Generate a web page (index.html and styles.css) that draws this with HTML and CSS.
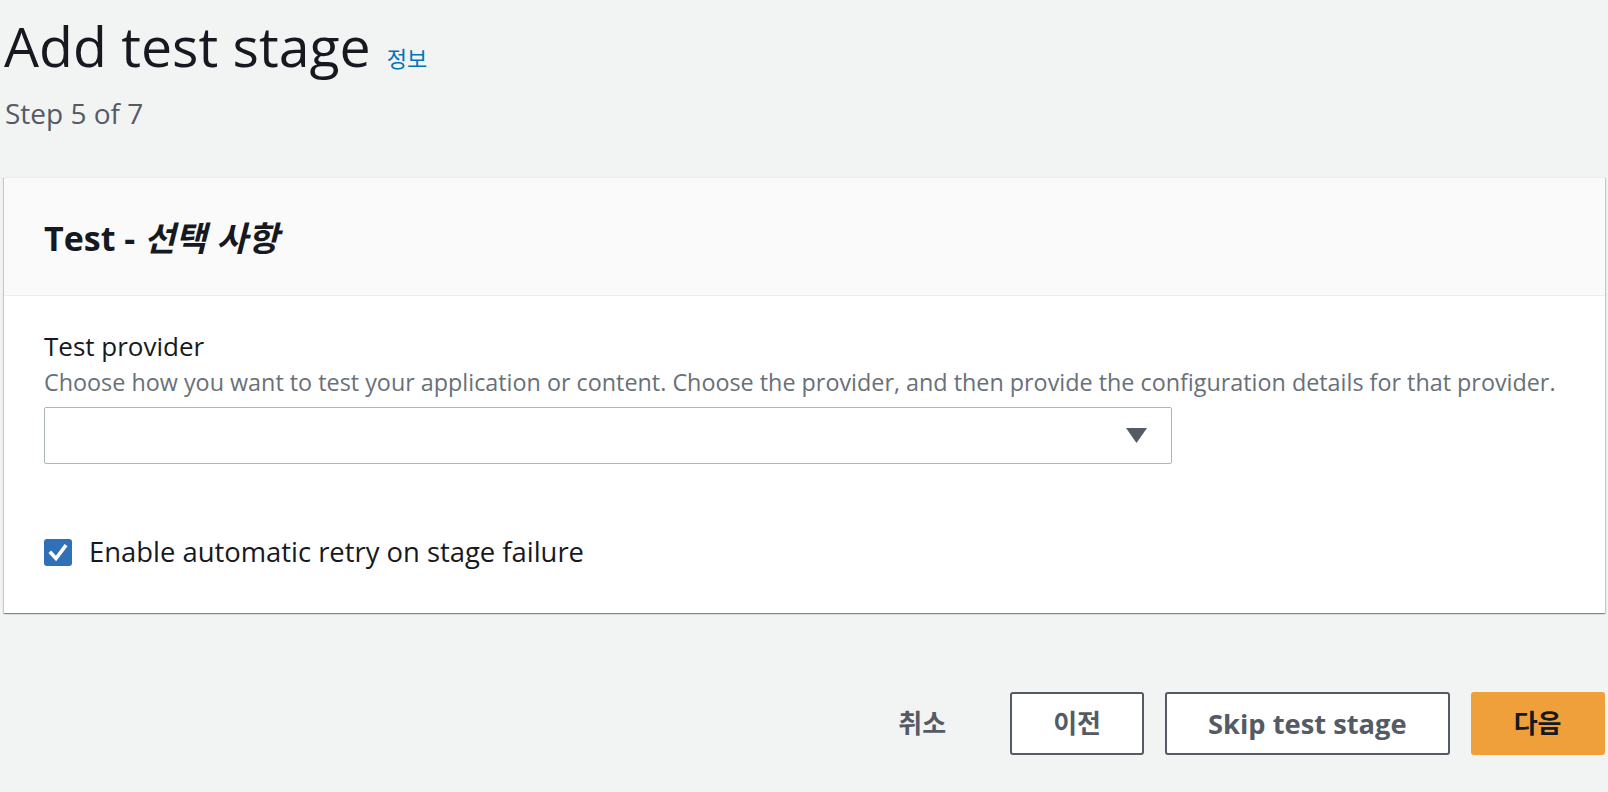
FILE: index.html
```html
<!DOCTYPE html>
<html lang="ko">
<head>
<meta charset="utf-8">
<title>Add test stage</title>
<link rel="stylesheet" href="styles.css">
</head>
<body>
<div class="page">
  <header class="page-head">
    <div class="title-row">
      <h1 class="title">Add test stage</h1>
      <a class="info-link" href="#">정보</a>
    </div>
    <div class="step">Step 5 of 7</div>
  </header>

  <section class="card">
    <div class="card-head">
      <h2 class="card-title">Test - <i class="optional">선택 사항</i></h2>
    </div>
    <div class="card-body">
      <div class="field">
        <label class="field-label">Test provider</label>
        <div class="field-desc">Choose how you want to test your application or content. Choose the provider, and then provide the configuration details for that provider.</div>
        <div class="select">
          <svg class="caret" width="21" height="15" viewBox="0 0 21 15"><polygon points="0,0 21,0 10.5,15" fill="#545b64"/></svg>
        </div>
      </div>
      <div class="check-row">
        <span class="checkbox">
          <svg width="28" height="27" viewBox="0 0 28 27"><polyline points="7,14 12,19.5 21,7.5" fill="none" stroke="#fff" stroke-width="3.6" stroke-linecap="square"/></svg>
        </span>
        <span class="check-label">Enable automatic retry on stage failure</span>
      </div>
    </div>
  </section>

  <div class="actions">
    <button class="btn btn-link">취소</button>
    <button class="btn btn-normal">이전</button>
    <button class="btn btn-normal btn-latin">Skip test stage</button>
    <button class="btn btn-primary">다음</button>
  </div>
</div>
</body>
</html>
```
FILE: styles.css
```css
html, body {
  margin: 0;
  padding: 0;
  background: #f2f3f3;
}
body {
  font-family: "Open Sans", "Noto Sans CJK KR", sans-serif;
  color: #16191f;
}
.page {
  padding: 8px 3px 0 4px;
}
.title-row {
  display: flex;
  align-items: baseline;
  gap: 16px;
}
.title {
  margin: 0;
  font-size: 55.4px;
  line-height: 76px;
  font-weight: 400;
  color: #16191f;
}
.info-link {
  font-family: "Noto Sans CJK KR", sans-serif;
  font-size: 22px;
  color: #0073bb;
  text-decoration: none;
}
.step {
  margin-top: 11px;
  font-size: 28px;
  line-height: 36px;
  color: #545b64;
  padding-left: 1px;
}
.card {
  margin-top: 46px;
  background: #fff;
  border-top: 1px solid #eaeded;
  box-shadow: 0 1px 1px 0 rgba(0, 28, 36, 0.3), 1px 1px 1px 0 rgba(0, 28, 36, 0.15), -1px 1px 1px 0 rgba(0, 28, 36, 0.15);
}
.card-head {
  background: #fafafa;
  border-bottom: 1px solid #eaeded;
  padding: 39px 40px 37px 40px;
}
.card-title {
  margin: 0;
  font-size: 34px;
  line-height: 40px;
  font-weight: 700;
}
.optional {
  font-family: "Noto Sans CJK KR", sans-serif;
  font-size: 34px;
  font-weight: 700;
}
.card-body {
  padding: 32px 40px 42px 40px;
}
.field-label {
  display: block;
  font-size: 26px;
  line-height: 37px;
  color: #16191f;
}
.field-desc {
  font-size: 23.35px;
  line-height: 34px;
  color: #687078;
  white-space: nowrap;
}
.select {
  margin-top: 8px;
  width: 1128px;
  height: 57px;
  box-sizing: border-box;
  border: 1px solid #aab7b8;
  border-radius: 2px;
  background: #fff;
  display: flex;
  align-items: center;
  justify-content: flex-end;
  padding-right: 24px;
}
.caret {
  display: block;
}
.check-row {
  margin-top: 69px;
  display: flex;
  align-items: center;
  gap: 17px;
}
.checkbox {
  width: 28px;
  height: 27px;
  border-radius: 3px;
  background: #3070b8;
  display: flex;
}
.check-label {
  font-size: 27.4px;
  line-height: 38px;
}
.actions {
  margin-top: 79px;
  display: flex;
  justify-content: flex-end;
  align-items: center;
  gap: 21px;
  padding-right: 0.5px;
}
.btn {
  font-family: "Open Sans", "Noto Sans CJK KR", sans-serif;
  font-size: 26px;
  line-height: 35px;
  font-weight: 700;
  height: 63px;
  box-sizing: border-box;
  border-radius: 3px;
  border: 2px solid transparent;
  padding: 0 41px;
  background: transparent;
  color: #545b64;
  cursor: pointer;
}
.btn-latin {
  font-size: 27.3px;
}
.btn-link {
  border-color: transparent;
}
.btn-normal {
  background: #fff;
  border-color: #545b64;
}
.btn-primary {
  background: #f0a03a;
  border-color: #f0a03a;
  color: #16191f;
}
```
